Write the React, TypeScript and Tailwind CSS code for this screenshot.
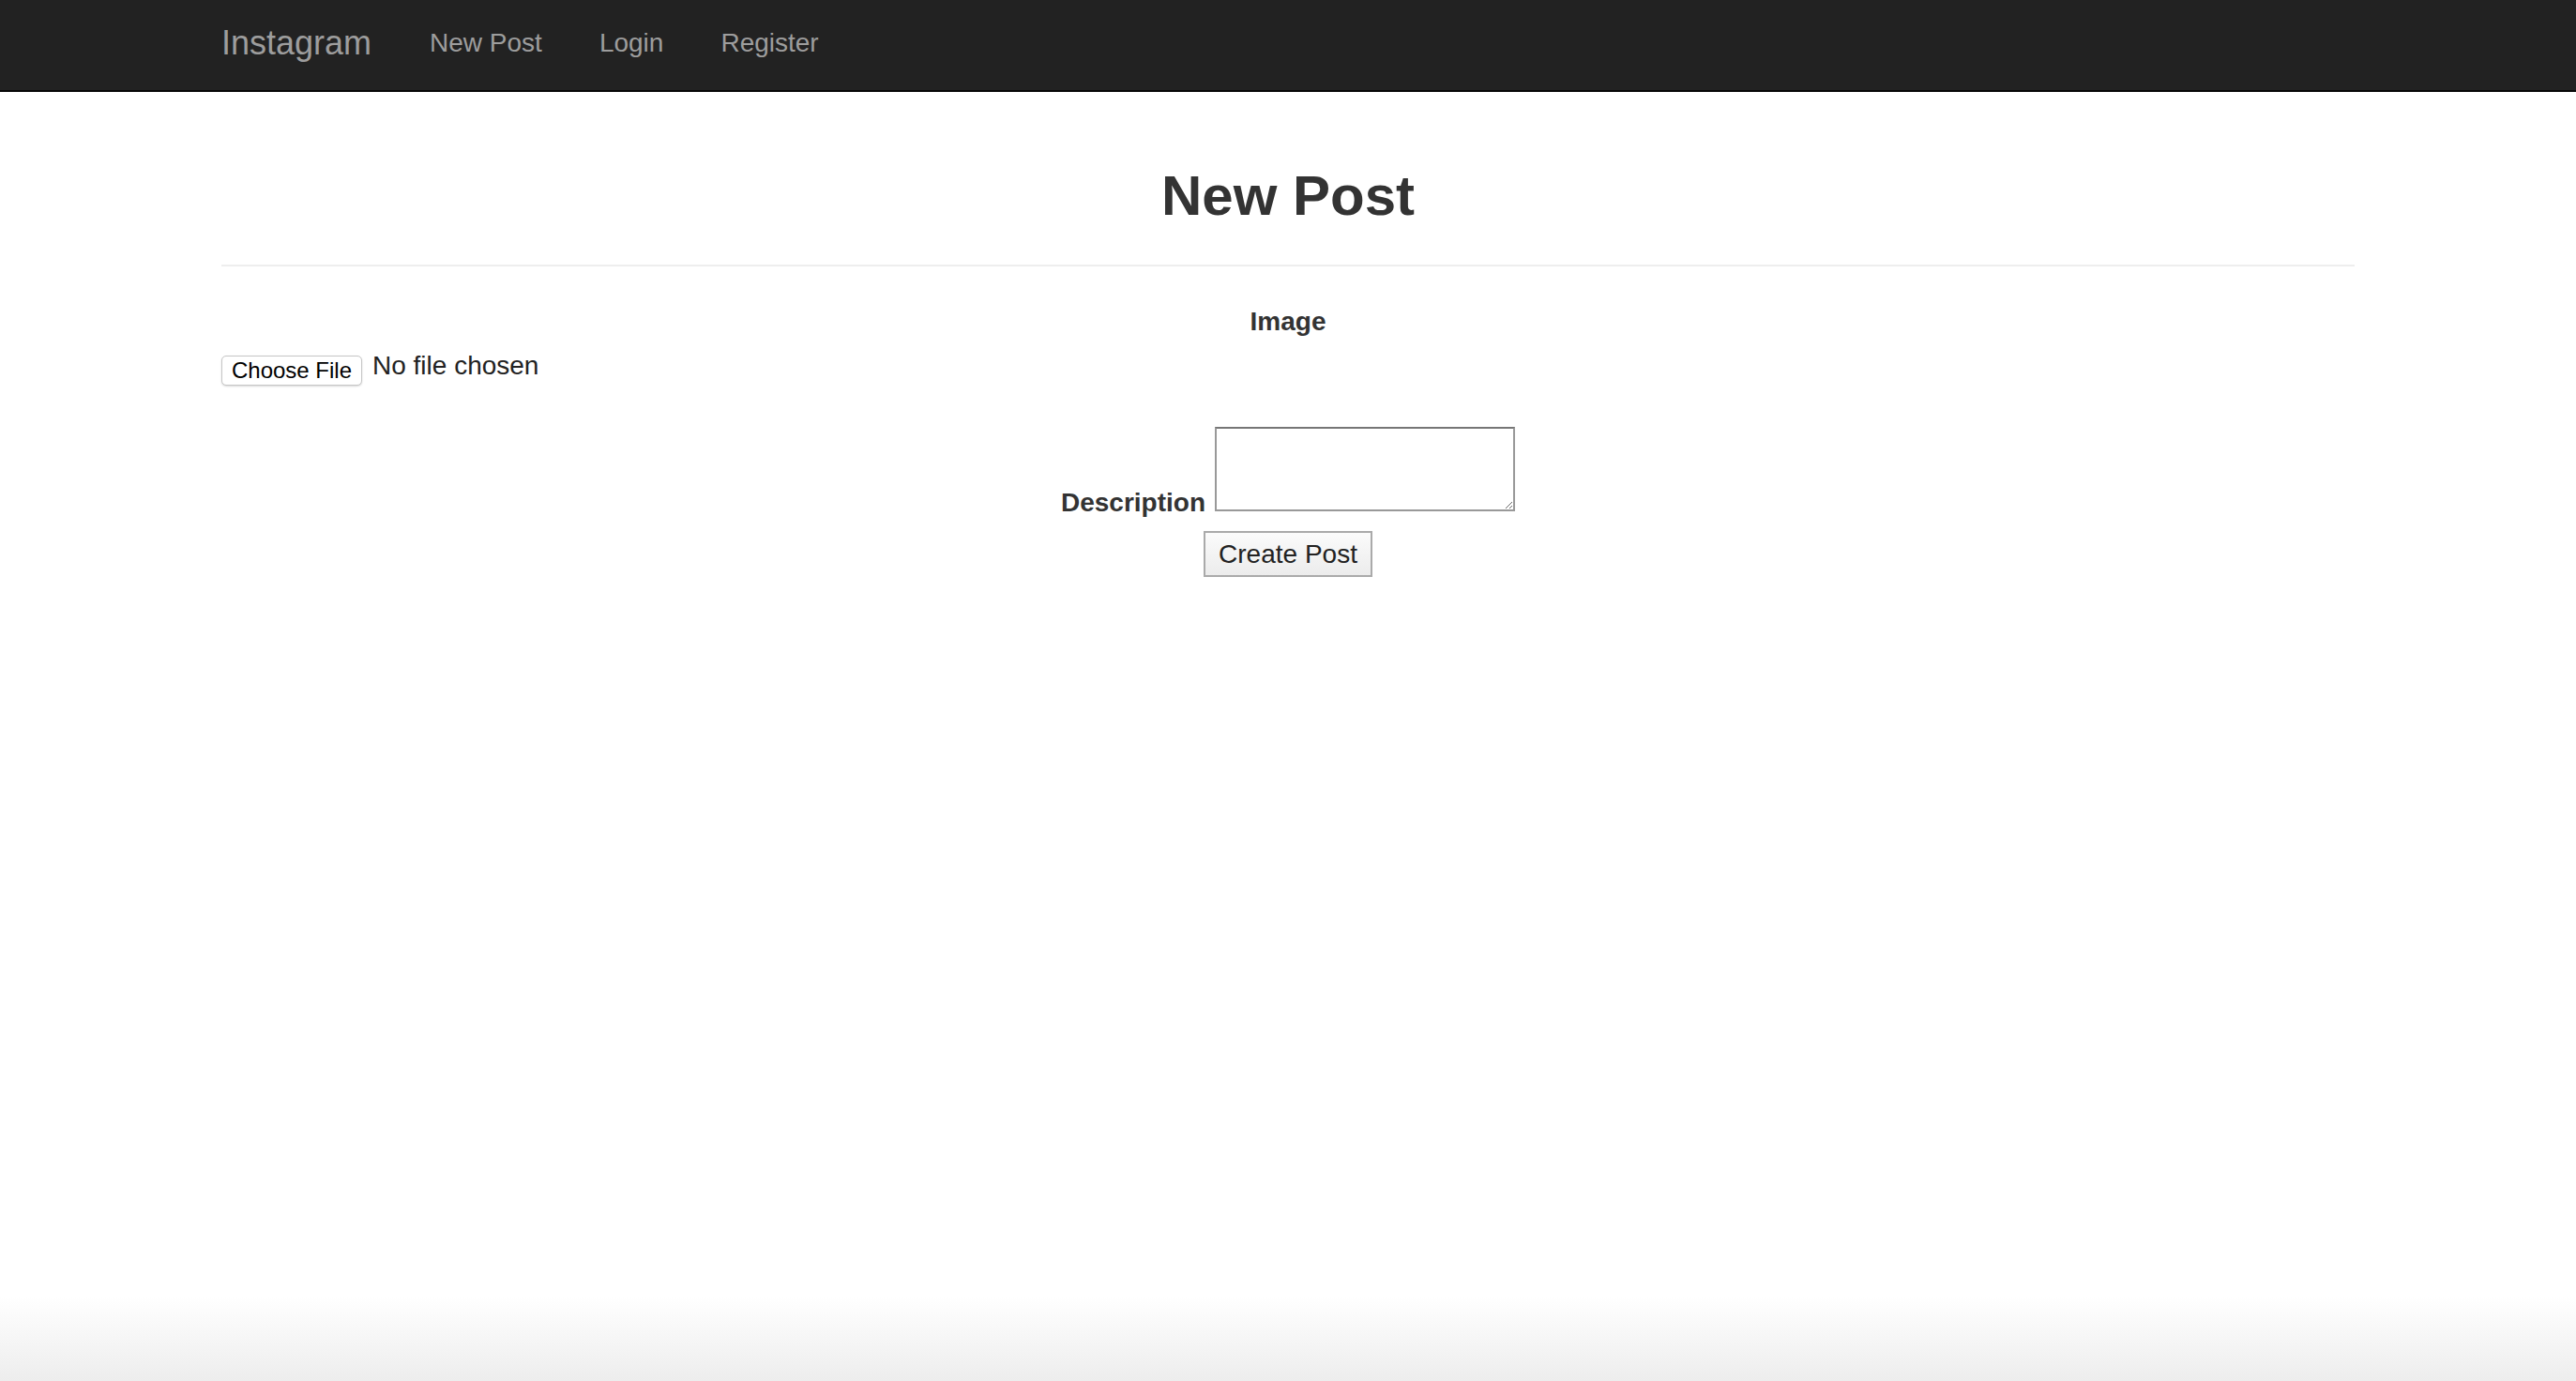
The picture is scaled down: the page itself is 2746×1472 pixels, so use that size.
import React from "react";

const font = { fontFamily: '"Liberation Sans", Arial, sans-serif' };

const Navbar = () => {
  return (
    <nav className="bg-[#222] border-b-2 border-[#080808] h-[98px]">
      <div className="w-[2274px] mx-auto flex items-start gap-[62px]">
        <a href="#" className="pt-[26px] text-[36px] leading-[40px] text-[#9d9d9d]">
          Instagram
        </a>
        <div className="flex gap-[61px] pt-[30px] text-[28px] leading-[32px] text-[#9d9d9d]">
          <a href="#">New Post</a>
          <a href="#">Login</a>
          <a href="#">Register</a>
        </div>
      </div>
    </nav>
  );
};

const NewPostPage = () => {
  return (
    <div className="min-h-screen flex flex-col bg-white text-[#333]" style={font}>
      <Navbar />

      <main className="w-[2274px] mx-auto">
        {/* page header */}
        <div className="mt-[78px] pb-[40px] border-b-2 border-[#eee]">
          <h1 className="text-center text-[60px] leading-[66px] font-bold">New Post</h1>
        </div>

        <form onSubmit={(e) => e.preventDefault()}>
          <div className="mt-[39px] text-center text-[28px] leading-[40px] font-bold">Image</div>

          <div className="mt-[11px] flex items-start">
            <button
              type="button"
              className="mt-[5px] w-[150px] h-[32px] bg-white border border-[#c6c6c6] rounded-[5px] shadow-[0_1px_2px_rgba(0,0,0,0.15)] text-[24px] leading-[30px] text-black"
            >
              Choose File
            </button>
            <span className="ml-[11px] text-[28px] leading-[32px] text-[#222]">No file chosen</span>
          </div>

          <div className="mt-[44px] flex items-start justify-center gap-[10px]">
            <label className="mt-[61px] text-[28px] leading-[40px] font-bold">Description</label>
            <textarea className="w-[320px] h-[90px] bg-white border-2 border-[#999] border-t-[#767676] outline-none" />
          </div>

          <div className="mt-[10px] flex justify-center">
            <button
              type="submit"
              className="w-[180px] h-[49px] border-2 border-[#aaa] bg-gradient-to-b from-[#fbfbfb] to-[#ececec] text-[28px] leading-[32px] text-[#222]"
            >
              Create Post
            </button>
          </div>
        </form>
      </main>

      <div className="flex-1" />
      <div className="h-[90px] bg-gradient-to-b from-white to-[#ededed]" />
    </div>
  );
};

export default function App() {
  return <NewPostPage />;
}
